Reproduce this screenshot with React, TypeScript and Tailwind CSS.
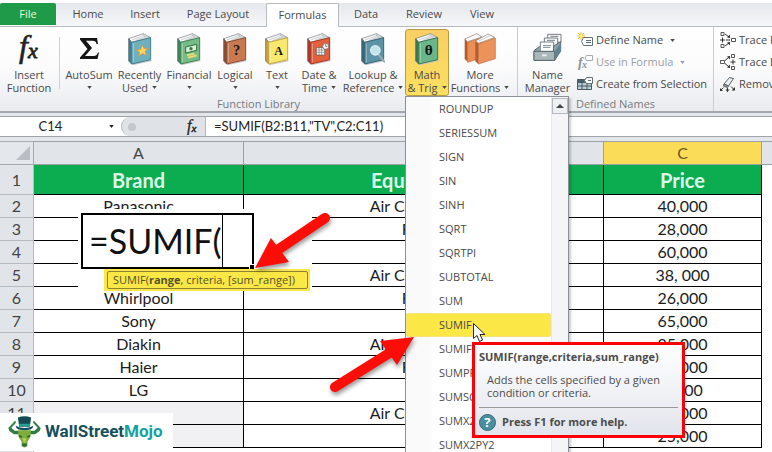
import type { ReactNode } from 'react'
import clsx from 'clsx'

const TABS = [
  { name: 'Home', width: 'w-16' },
  { name: 'Insert', width: 'w-[50px]' },
  { name: 'Page Layout', width: 'w-[96px]' },
  { name: 'Formulas', width: 'w-[73px]' },
  { name: 'Data', width: 'w-[54px]' },
  { name: 'Review', width: 'w-[62px]' },
  { name: 'View', width: 'w-[54px]' },
]

const MENU = ['ROUNDUP', 'SERIESSUM', 'SIGN', 'SIN', 'SINH', 'SQRT', 'SQRTPI', 'SUBTOTAL', 'SUM', 'SUMIF', 'SUMIFS', 'SUMPRODUCT', 'SUMSQ', 'SUMX2MY2', 'SUMX2PY2']

const ROWS = [
  ['Panasonic', 'Air Conditioner', '40,000'],
  ['', 'Fridge', '28,000'],
  ['', 'TV', '60,000'],
  ['', 'Air Conditioner', '38, 000'],
  ['Whirlpool', 'Fridge', '26,000'],
  ['Sony', 'TV', '65,000'],
  ['Diakin', 'Air Conditioner', '35,000'],
  ['Haier', 'Fridge', '25,000'],
  ['LG', 'TV', '9,000'],
  ['', 'Air Conditioner', '37,000'],
  ['', 'TV', '25,000'],
]

function Caret({ className = '' }: { className?: string }) {
  return <svg viewBox="0 0 6 4" className={clsx('inline-block h-[3px] w-[5px] shrink-0', className)} fill="currentColor"><path d="M0 0h6L3 4z" /></svg>
}

function Book({ cover, spine, children }: { cover: string; spine: string; children?: ReactNode }) {
  return (
    <svg viewBox="0 0 72 96" className="h-8 w-6" strokeLinejoin="round">
      <path d="M10 94l59-13 3 3-56 12z" fill="#bfc3c8" />
      <path d="M2 17L46 2l22 12-57 14z" fill="#fbfbfb" stroke="#70767c" strokeWidth="2" />
      <path d="M12 21L48 7M22 23l30-13M31 22l24-10" stroke="#b4b9be" strokeWidth="2" fill="none" />
      <path d="M46 2l3 9 19 4z" fill="#dfe3e6" stroke="#8a8f94" strokeWidth="1" />
      <path d="M2 17l9 11v65l-9-9z" fill={spine} stroke="#4d5962" strokeWidth="2" />
      <path d="M11 28l57-14v66L11 93z" fill={cover} stroke={spine} strokeWidth="3" />
      <path d="M16 31v57" stroke="#fff" strokeOpacity=".35" strokeWidth="3" />
      {children}
    </svg>
  )
}

function BookGlyph({ children, size = 36 }: { children: string; size?: number }) {
  return <text x="41" y="66" textAnchor="middle" fontSize={size} fontWeight="700" fontFamily="'Liberation Serif', serif" fill="#151515">{children}</text>
}

function MoreBooks() {
  return (
    <svg viewBox="0 0 96 96" className="h-8 w-8" strokeLinejoin="round">
      <path d="M2 18L38 2l16 10-43 14z" fill="#fbfbfb" stroke="#8a7468" strokeWidth="2" />
      <path d="M2 18l9 10v58l-9-8z" fill="#b35c31" />
      <path d="M11 28l42-14v60L11 88z" fill="#ec8f55" stroke="#bd6a3c" strokeWidth="2" />
      <path d="M34 24L72 3l20 10-48 18z" fill="#fbfbfb" stroke="#8a7468" strokeWidth="2" />
      <path d="M44 24l34-16" stroke="#b4b9be" strokeWidth="2" />
      <path d="M34 24l9 9v60l-9-8z" fill="#b35c31" />
      <path d="M43 33l51-18v62L43 93z" fill="#ec935c" stroke="#bd6a3c" strokeWidth="2" />
    </svg>
  )
}

function FxIcon({ className }: { className: string }) {
  return (
    <svg viewBox="0 0 26 32" className={className} fontStyle="italic" fontFamily="'Liberation Serif', serif" fill="currentColor" stroke="currentColor">
      <text x="3" y="24" fontSize="32" strokeWidth=".600">f</text>
      <text x="12" y="25" fontSize="22" strokeWidth=".800">x</text>
    </svg>
  )
}

function SigmaIcon() {
  return <svg viewBox="0 0 24 32" className="h-8 w-6"><path d="M3 5h17l1 6h-1.500c-.5-2.500-1.500-3.300-4-3.300H9l6 7.300-7 8h8.500c2.500 0 3.500-1 4.500-3.500H22L20.500 26H3v-1.500L10.500 16 3 6.500z" fill="#151515" /></svg>
}

function NameManagerIcon() {
  return (
    <svg viewBox="0 0 90 84" className="h-7 w-[30px]" strokeLinejoin="round">
      <path d="M44 4h40v24H44z" fill="#f7f8f8" stroke="#777e82" strokeWidth="3" />
      <path d="M34 15h40v26H34z" fill="#f7f8f8" stroke="#777e82" strokeWidth="3" />
      <path d="M22 27h40v30H22z" fill="#fff" stroke="#777e82" strokeWidth="3" />
      <path d="M30 38h24M42 22h24M52 10h24M30 46h16" stroke="#7b898f" strokeWidth="3" />
      <path d="M3 53l16-12h4v13h38V40l22-14v28L65 82H3z" fill="#8fa2a9" stroke="#59676e" strokeWidth="3" />
      <path d="M23 40h36v14H23z" fill="#fff" />
      <path d="M30 43h22" stroke="#7b898f" strokeWidth="3" />
      <path d="M3 55h62v27H3z" fill="#a9b7bb" stroke="#59676e" strokeWidth="3" />
      <path d="M65 55l19-26v26L65 82z" fill="#62848f" />
      <path d="M27 64h14v6H27z" fill="#e6ebed" />
    </svg>
  )
}

const smallIcons: Record<string, ReactNode> = {
  define: (
    <>
      <path d="M6.500 5.500h9v8h-9L4.500 9.500z" fill="#fff" stroke="#667077" />
      <path d="M9 8.500h5M9 10.500h5" stroke="#667077" />
      <path d="M4 0v8M0 4h8M1 1l6 6M7 1L1 7" stroke="#f1b71c" />
      <circle cx="4" cy="4" r="1.500" fill="#fff27a" />
    </>
  ),
  use: (
    <>
      <text x="1" y="13" fontSize="14" fontStyle="italic" fontWeight="700" fontFamily="'Liberation Serif', serif" fill="#8f9499">f</text>
      <text x="5" y="14" fontSize="10" fontStyle="italic" fontWeight="700" fontFamily="'Liberation Serif', serif" fill="#8f9499">x</text>
      <path d="M9.500 1.500h6v5h-6L8 4z" fill="#fff" stroke="#a7abb0" />
    </>
  ),
  create: (
    <>
      <path d="M.5 3.500h14v10H.5z" fill="#b8cfd8" stroke="#4b5962" />
      <path d="M.5 3.500h8v3h-8z" fill="#46636f" />
      <path d="M.5 6.500h14M.5 10h14M5 3.500v10M10 3.500v10" stroke="#4b5962" fill="none" />
      <path d="M9.500 1.500h6v6h-6L7.500 4.500z" fill="#fff" stroke="#667077" />
      <path d="M11 4.500h3" stroke="#667077" />
    </>
  ),
  precedents: (
    <>
      <path d="M1 .5h3v3H1zM1 12.500h3v3H1zM11.500 6.500h4v3h-4z" fill="#fff" stroke="#555" />
      <path d="M2.500 5.500v5M0 8h5M5 2l4 3M5 14l4-3M6 8h4" stroke="#333" fill="none" />
      <path d="M10 6V2.500L7 5.500zM10 10v3.500L7 10.500z" fill="#333" />
    </>
  ),
  dependents: (
    <>
      <path d="M.5 6.500h4v3h-4zM11.500 .5h3v3h-3zM11.500 12.500h3v3h-3z" fill="#fff" stroke="#555" />
      <path d="M13 5.500v5M10.500 8h5M5 6.500l4-3.500M5 9.500l4 3.500" stroke="#333" fill="none" />
      <path d="M10 2v3.500L7 2.500zM10 14v-3.500L7 13.500z" fill="#333" />
    </>
  ),
  remove: (
    <>
      <path d="M4 8L9.500 1.500l4 1L8.500 10z" fill="#eceef0" stroke="#555d63" />
      <path d="M4 8l4.500 2-1 1.500L3.500 10z" fill="#9fa7ac" stroke="#555d63" />
      <path d="M3.500 11.500L1 14M7.500 12v3.500M11 10.500l3 3" stroke="#333" fill="none" />
      <path d="M0 12v3h3zM5.500 13.500h4l-2 2.500zM15 11v3.500h-3.500z" fill="#333" />
    </>
  ),
}

function BigButton({ icon, lines, width, caret = true, active = false }: { icon: ReactNode; lines: string[]; width: string; caret?: boolean; active?: boolean }) {
  return (
    <button type="button" className={clsx('flex h-[67px] shrink-0 flex-col items-center rounded-[3px] border pt-[3px] leading-[13px]', width, active ? 'border-[#b99b45] bg-linear-to-b from-[#f9cf63] to-[#fbe061]' : 'border-transparent')}>
      <span className="flex h-[35px] justify-center">{icon}</span>
      <span className="whitespace-nowrap">{lines[0]}</span>
      <span className="flex h-[13px] items-center gap-1 whitespace-nowrap">{lines[1]}{caret && <Caret />}</span>
    </button>
  )
}

function SmallButton({ icon, label, caret = false, disabled = false }: { icon: string; label: string; caret?: boolean; disabled?: boolean }) {
  return (
    <button type="button" disabled={disabled} className={clsx('flex h-[22px] items-center gap-[3px] whitespace-nowrap', disabled && 'text-[#9a9ea4]')}>
      <svg viewBox="0 0 16 16" className="h-4 w-4 shrink-0">{smallIcons[icon]}</svg>
      {label}
      {caret && <Caret className="ml-1" />}
    </button>
  )
}

function FunctionMenu() {
  return (
    <div className="absolute top-full left-0 z-20 flex w-[164px] border border-[#8b9097] bg-white shadow-[2px_2px_2px_rgba(0,0,0,0.2)]">
      <ul className="grow bg-linear-to-r from-[#fafafb] from-[25px] to-white to-[26px]">
        {MENU.map((name) => (
          <li key={name} className="h-6">
            <button type="button" className={clsx('flex h-6 w-full items-center pl-8 text-left', name === 'SUMIF' ? 'rounded-xs border border-[#f5e27a] bg-[#fbe745]' : 'border border-transparent')}>{name}</button>
          </li>
        ))}
      </ul>
      <div className="w-[17px] border-l border-[#e6e7ec] bg-[#f5f5f8] pt-px">
        <button type="button" aria-label="Scroll up" className="flex h-4 w-full items-center justify-center border border-[#b3b8c0] bg-[#eef0f3]">
          <svg viewBox="0 0 8 4" className="h-1 w-2"><path d="M0 4h8L4 0z" fill="#444" /></svg>
        </button>
      </div>
    </div>
  )
}

function Ribbon() {
  return (
    <div className="flex h-[86px] shrink-0 border-b-2 border-[#a3a6ab] bg-linear-to-b from-white via-[#fbfbfc] to-[#e9ebef]">
      <section className="flex shrink-0 flex-col justify-between border-r border-[#c9ccd1] pt-0.5">
        <div className="flex pr-1.5">
          <BigButton icon={<FxIcon className="h-8 w-7 text-[#222]" />} lines={['Insert', 'Function']} width="w-[58px]" caret={false} />
          <div className="mt-2 mr-1 ml-px h-[52px] w-px bg-[#cdd0d5]" />
          <BigButton icon={<SigmaIcon />} lines={['AutoSum', '']} width="w-[50px]" />
          <BigButton icon={<Book cover="#6fb0bf" spine="#43808f"><path d="M43 36l5 11 12-1-9 9 4 12-12-6-11 9 3-13-10-6 13-2z" fill="#ffd75e" stroke="#ee8b2c" strokeWidth="2" /></Book>} lines={['Recently', 'Used']} width="w-[51px]" />
          <BigButton icon={<Book cover="#74bb85" spine="#3e8653"><path d="M26 42l33-8v18l-33 8z" fill="#d9efd0" stroke="#2d6e3f" strokeWidth="3" /><circle cx="42" cy="47" r="5" fill="#3d7c49" /><path d="M30 67l22-5M33 74l26-7" stroke="#f2dc72" strokeWidth="5" /></Book>} lines={['Financial', '']} width="w-12" />
          <BigButton icon={<Book cover="#c9794f" spine="#8e4c2d"><BookGlyph size={44}>?</BookGlyph></Book>} lines={['Logical', '']} width="w-11" />
          <BigButton icon={<Book cover="#f8e96c" spine="#c9a63a"><BookGlyph>A</BookGlyph></Book>} lines={['Text', '']} width="w-10" />
          <BigButton icon={<Book cover="#e3603d" spine="#ae3620"><path d="M28 44h25v22H28z" fill="#fff" stroke="#555" strokeWidth="2" /><path d="M28 51h25M28 58h25M36 45v21M44 45v21" stroke="#777" strokeWidth="2" /><circle cx="56" cy="40" r="9" fill="#fff" stroke="#555" strokeWidth="2" /><path d="M56 34v6h5" stroke="#333" strokeWidth="2" fill="none" /></Book>} lines={['Date &', 'Time']} width="w-11" />
          <BigButton icon={<Book cover="#5b94a6" spine="#386779"><path d="M51 63l19 23" stroke="#9ba8b0" strokeWidth="6" strokeLinecap="round" /><circle cx="43" cy="52" r="14" fill="#c4e3e8" stroke="#e4eff2" strokeWidth="4" /></Book>} lines={['Lookup &', 'Reference']} width="w-16" />
          <div className="relative">
            <BigButton active icon={<Book cover="#6ab689" spine="#397c55"><BookGlyph size={46}>θ</BookGlyph></Book>} lines={['Math', '& Trig']} width="w-11" />
            <FunctionMenu />
          </div>
          <BigButton icon={<MoreBooks />} lines={['More', 'Functions']} width="w-[62px]" />
        </div>
        <h2 className="text-center leading-[15px] text-[#777b80]">Function Library</h2>
      </section>
      <section className="flex shrink-0 flex-col justify-between border-r border-[#c9ccd1] pt-0.5">
        <div className="flex pr-1.5">
          <BigButton icon={<NameManagerIcon />} lines={['Name', 'Manager']} width="w-[59px]" caret={false} />
          <div className="flex flex-col">
            <SmallButton icon="define" label="Define Name" caret />
            <SmallButton icon="use" label="Use in Formula" caret disabled />
            <SmallButton icon="create" label="Create from Selection" />
          </div>
        </div>
        <h2 className="text-center leading-[15px] text-[#777b80]">Defined Names</h2>
      </section>
      <section className="flex flex-col pt-0.5 pl-1.5">
        <SmallButton icon="precedents" label="Trace Precedents" />
        <SmallButton icon="dependents" label="Trace Dependents" />
        <SmallButton icon="remove" label="Remove Arrows" />
      </section>
    </div>
  )
}

function Sheet() {
  const cell = 'border-b border-black p-0 text-center align-middle'
  const rowHead = 'border-r border-b border-[#b5bac1] bg-[#e1e5ea] p-0 align-middle font-normal text-[#444]'
  return (
    <table className="w-full table-fixed border-separate border-spacing-0 font-['Lato',sans-serif] text-base leading-5 text-[#1c1c1c]">
      <colgroup><col className="w-[34px]" /><col className="w-[210px]" /><col /><col className="w-[158px]" /><col className="w-[10px]" /></colgroup>
      <thead>
        <tr className="h-6">
          <th className="border-t border-r border-b border-[#a5aab1] bg-[#e4e8ec] p-0"><svg viewBox="0 0 14 14" className="ml-4 size-3.5"><path d="M14 0v14H0z" fill="#b9bec5" /></svg></th>
          {['A', 'B', 'C'].map((c) => (
            <th key={c} scope="col" className={clsx('border-t border-r border-b border-[#9ca1a8] p-0 font-normal', c === 'C' ? 'bg-[#fbdc58] text-[#6b5520]' : 'bg-[#e1e5ea] text-[#444]')}>{c}</th>
          ))}
          <th className="border-t border-b border-[#9ca1a8] bg-[#e1e5ea] p-0" />
        </tr>
      </thead>
      <tbody>
        <tr className="h-[30px] text-xl leading-6">
          <th scope="row" className={clsx(rowHead, 'text-base')}>1</th>
          {['Brand', 'Equipments', 'Price'].map((h) => <td key={h} className={clsx(cell, 'border-r bg-[#0cac50] font-bold text-[#dcfae8]')}>{h}</td>)}
          <td className="p-0" />
        </tr>
        {ROWS.map(([brand, item, price], i) => (
          <tr key={i} className="h-[23px]">
            <th scope="row" className={rowHead}>{i + 2}</th>
            <td className={clsx(cell, 'border-r', i > 8 && 'bg-[#f1f0f2]')}>{brand}</td>
            <td className={clsx(cell, 'border-r')}>{item}</td>
            <td className={clsx(cell, 'border-r')}>{price}</td>
            <td className="p-0" />
          </tr>
        ))}
        <tr className="h-[23px]"><th scope="row" className={rowHead}>13</th><td /><td /><td /><td /></tr>
      </tbody>
    </table>
  )
}

// enlarged view of the cell being edited, with its argument hint
function CellCallout() {
  return (
    <div className="absolute top-[68px] left-[78px] z-10 h-[82px] w-[234px] bg-white pt-1 pl-[3px]">
      <div className="relative flex h-14 w-[173px] items-center border-2 border-black pl-1.5">
        <span className="border-r border-black font-['Lato',sans-serif] text-[34px] leading-[52px] text-[#111]">=SUMIF(</span>
        <i className="absolute -right-0.5 -bottom-0.5 size-[5px] border-t border-l border-white bg-black" />
      </div>
      <div className="ml-[23px] w-[206px] bg-[#fbe745] p-0.5 pl-[3px]">
        <p className="rounded-xs border border-[#8a7f35] pl-[5px] leading-4 whitespace-nowrap text-[#55522a]">SUMIF(<b>range</b>, criteria, [sum_range])</p>
      </div>
    </div>
  )
}

function Arrow({ className, shaft, head, viewBox }: { className: string; shaft: string; head: string; viewBox: string }) {
  return (
    <svg viewBox={viewBox} className={clsx('absolute z-30 drop-shadow-[1px_3px_2px_rgba(0,0,0,0.4)]', className)}>
      <path d={shaft} stroke="#fd0d08" strokeWidth="10" strokeLinecap="round" />
      <path d={head} fill="#fd0d08" />
    </svg>
  )
}

function FunctionTip() {
  return (
    <div role="tooltip" className="absolute top-[201px] left-[472px] z-30 w-[213px] border-3 border-[#fb0007] bg-linear-to-b from-white to-[#e2e5ec] p-1 text-[#4c4c4c]">
      <p className="leading-4 font-bold">SUMIF(range,criteria,sum_range)</p>
      <p className="mt-2 border-b border-[#999] pb-2 pl-2 leading-[13px]">Adds the cells specified by a given condition or criteria.</p>
      <p className="mt-1.5 flex items-center gap-1.5 font-bold">
        <svg viewBox="0 0 18 18" className="size-[17px]">
          <circle cx="9" cy="9" r="8.500" fill="#4c8da0" stroke="#336878" />
          <text x="9" y="14" textAnchor="middle" fontSize="14" fontWeight="700" fill="#fff">?</text>
        </svg>
        Press F1 for more help.
      </p>
    </div>
  )
}

function BrandBadge() {
  return (
    <div className="absolute top-[272px] left-0 z-10 flex h-[38px] w-[173px] items-center gap-1 bg-white pl-2 font-['Roboto',sans-serif] text-[17px] font-bold text-[#16505c]">
      <svg viewBox="0 0 100 96" className="h-8 w-[33px] shrink-0">
        <path d="M36 44H20L10 35l14-15-2-7L1 36l3 9 14 10h20zM64 44h16l10-9-14-15 2-7 21 23-3 9-14 10H62z" fill="#2e7d46" />
        <path d="M30 43h40l-3 22-8 12v14l-9 4-9-4V77l-8-12z" fill="#7dae3a" />
        <path d="M33 56l10 5-3 5-8-4zM67 56l-10 5 3 5 8-4zM43 83h14v7l-7 3-7-3z" fill="#2a6b3b" />
        <path d="M44 66h12l-4 14h-4z" fill="#b5cf55" />
        <path d="M30 4q20-8 40 0l-4 28H34z" fill="#154b57" />
        <path d="M33 23h34l-1 8H34z" fill="#26a08f" />
        <path d="M23 29q27 14 54 0-2 14-27 14T23 29z" fill="#17505b" />
      </svg>
      <span>WallStreet<span className="text-[#12a3a0]">Mojo</span></span>
    </div>
  )
}

export default function App() {
  return (
    <div className="flex h-screen flex-col overflow-hidden bg-white font-['Open_Sans',sans-serif] text-[11px] text-[#4a4a4a]">
      <nav className="mt-[3px] flex h-6 shrink-0 border-b border-[#b6babf] bg-linear-to-b from-[#e4e7ec] to-[#f6f7f9]">
        <button type="button" className="mb-px w-14 rounded-t-xs bg-[#1f9a48] text-[#e6f7d8]">File</button>
        {TABS.map((t) => (
          <button key={t.name} type="button" className={clsx('whitespace-nowrap', t.width, t.name === 'Formulas' && '-mb-px rounded-t-xs border border-b-0 border-[#b6babf] bg-white')}>{t.name}</button>
        ))}
      </nav>
      <Ribbon />
      <div className="flex h-7 shrink-0 bg-[#e3e6ea] pt-[3px] pb-1">
        <div className="flex grow border-y border-[#a0a4a9] bg-white font-['Lato',sans-serif] text-[13px] text-[#222]">
          <input aria-label="Name Box" defaultValue="C14" className="w-[101px] text-center" />
          <button type="button" aria-label="Names" className="flex w-5 items-center justify-center"><Caret className="h-1 w-2" /></button>
          <div className="flex w-[85px] items-center justify-between rounded-l-full border-x border-[#b4b8be] bg-[#dfe3e8] px-1.5">
            <i className="size-2 rounded-full bg-[#c3c8ce]" />
            <FxIcon className="h-4 w-3.5" />
          </div>
          <input aria-label="Formula Bar" defaultValue={'=SUMIF(B2:B11,"TV",C2:C11)'} className="min-w-0 grow pl-2" />
        </div>
      </div>
      <main className="relative">
        <Sheet />
        <CellCallout />
        <BrandBadge />
        <Arrow className="top-[69px] left-[250px] h-[70px] w-[84px]" viewBox="250 210 84 70" shaft="M325 218L279 249" head="M255 268l16-30 18 24z" />
        <Arrow className="top-[189px] left-[326px] h-[70px] w-[94px]" viewBox="326 330 94 70" shaft="M335 387L391 352" head="M414 337l-34 4 17 24z" />
        <FunctionTip />
        <svg viewBox="0 0 13 19" className="absolute top-[182px] left-[473px] z-40 h-[19px] w-[13px]"><path d="M.5.5v15l3.500-3 2.500 6 3-1.500-2.500-5.500H12z" fill="#fff" stroke="#222" /></svg>
      </main>
    </div>
  )
}
